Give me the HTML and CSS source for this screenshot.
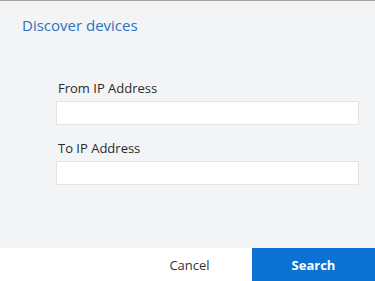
FILE: index.html
```html
<!DOCTYPE html>
<html lang="en">
<head>
  <meta charset="UTF-8">
  <title>Discover devices</title>
  <link rel="stylesheet" href="styles.css">
</head>
<body>
  <div class="dialog">
    <div class="dialog-body">
      <h1 class="title">Discover devices</h1>
      <div class="fields">
        <label for="from-ip">From IP Address</label>
        <input id="from-ip" type="text">
        <label for="to-ip">To IP Address</label>
        <input id="to-ip" type="text">
      </div>
    </div>
    <div class="dialog-footer">
      <button class="btn-cancel">Cancel</button>
      <button class="btn-search">Search</button>
    </div>
  </div>
</body>
</html>
```

FILE: styles.css
```css
html, body { margin: 0; padding: 0; }
body { font-family: "Open Sans", "Noto Sans", sans-serif; width: 375px; height: 281px; overflow: hidden; }
.dialog { display: flex; flex-direction: column; height: 281px; border-top: 1px solid #a3a3a3; box-sizing: border-box; background: #f3f4f6; }
.dialog-body { flex: 1; padding: 14px 16px 0 22px; }
.title { margin: 0; font-size: 15px; font-weight: normal; color: #2a73c1; line-height: 20px; }
.fields { padding: 45px 0 0 34px; }
.fields label { display: block; font-size: 13px; color: #2b2b2b; line-height: 17px; margin-bottom: 4px; padding-left: 2px; }
.fields input { display: block; box-sizing: border-box; width: 303px; height: 24px; margin: 0 0 15px; border: 1px solid #e3e4e6; background: #fff; }
.dialog-footer { display: flex; justify-content: flex-end; height: 33px; background: #fff; }
.dialog-footer button { border: none; font-family: inherit; font-size: 13px; cursor: pointer; }
.btn-cancel { width: 125px; background: #fff; color: #333; }
.btn-search { width: 123px; background: #0b72d3; color: #fff; font-weight: bold; }
```
